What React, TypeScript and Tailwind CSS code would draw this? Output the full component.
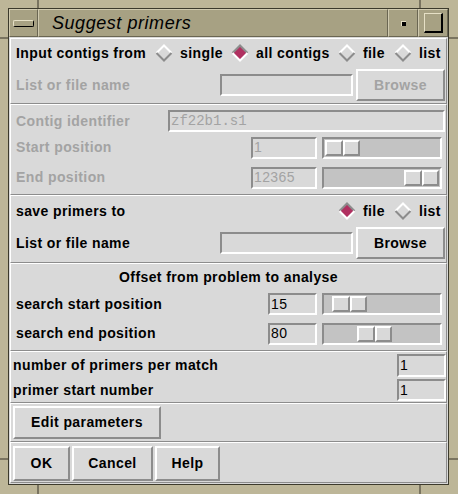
import React from "react";

const FONT = "font-['Liberation_Sans',Arial,sans-serif]";

function Diamond({ on }: { on?: boolean }) {
  return (
    <svg width="18" height="18" viewBox="0 0 18 18" className="shrink-0">
      <polygon points="9,1 17,9 9,17 1,9" fill={on ? "#b03060" : "#d9d9d9"} />
      <polyline points="1.5,9 9,1.5 16.5,9" fill="none" stroke={on ? "#8c8c8c" : "#ffffff"} strokeWidth="2" />
      <polyline points="1.5,9 9,16.5 16.5,9" fill="none" stroke={on ? "#ffffff" : "#8c8c8c"} strokeWidth="2" />
    </svg>
  );
}

function Entry({ w, h = "h-[22px]", text, mono, disabled }: { w: string; h?: string; text?: string; mono?: boolean; disabled?: boolean }) {
  return (
    <div
      className={`${w} ${h} shrink-0 border-2 border-t-[#8c8c8c] border-l-[#8c8c8c] border-b-white border-r-white bg-[#d9d9d9] flex items-center pl-[1px] overflow-hidden whitespace-nowrap ${
        mono ? "font-['Liberation_Mono',monospace] text-[14px]" : "text-[14px] tracking-[0.4px]"
      } ${disabled ? "text-[#a3a3a3]" : "text-black"}`}
    >
      {text}
    </div>
  );
}

function Button({ w, h, label, disabled, cls = "" }: { w: string; h: string; label: string; disabled?: boolean; cls?: string }) {
  return (
    <div
      className={`${w} ${h} ${cls} shrink-0 border-2 border-t-white border-l-white border-b-[#8c8c8c] border-r-[#8c8c8c] bg-[#d9d9d9] flex items-center justify-center font-bold text-[14px] tracking-[0.4px] whitespace-nowrap ${
        disabled ? "text-[#a3a3a3]" : "text-black"
      }`}
    >
      {label}
    </div>
  );
}

function Slider({ ml }: { ml: string }) {
  return (
    <div className="w-[120px] h-[22px] shrink-0 border-2 border-t-[#8c8c8c] border-l-[#8c8c8c] border-b-white border-r-white bg-[#c3c3c3] flex items-center">
      <div className={`${ml} flex`}>
        <div className="w-[18px] h-[16px] border-2 border-t-white border-l-white border-b-[#8c8c8c] border-r-[#8c8c8c] bg-[#d9d9d9]" />
        <div className="w-[17px] h-[16px] border-2 border-t-white border-l-white border-b-[#8c8c8c] border-r-[#8c8c8c] bg-[#d9d9d9]" />
      </div>
    </div>
  );
}

const SECTION = "shrink-0 border border-t-white border-l-white border-b-[#8c8c8c] border-r-[#8c8c8c] flex flex-col";
const LABEL = "font-bold text-[14px] tracking-[0.4px] whitespace-nowrap";

export default function App() {
  return (
    <div className={`${FONT} w-[458px] h-[494px] bg-[#bdb698] pt-[8px] pl-[8px] pr-[9px] pb-[9px] relative`}>
      {/* frame corner marks */}
      <div className="absolute left-[37px] top-0 w-[2px] h-[8px] bg-[#7a7460]" />
      <div className="absolute left-[419px] top-0 w-[2px] h-[8px] bg-[#7a7460]" />
      <div className="absolute left-[37px] bottom-0 w-[2px] h-[9px] bg-[#7a7460]" />
      <div className="absolute left-[419px] bottom-0 w-[2px] h-[9px] bg-[#7a7460]" />
      <div className="absolute left-0 top-[37px] w-[8px] h-[2px] bg-[#7a7460]" />
      <div className="absolute right-0 top-[37px] w-[9px] h-[2px] bg-[#7a7460]" />
      <div className="absolute left-0 top-[458px] w-[8px] h-[2px] bg-[#7a7460]" />
      <div className="absolute right-0 top-[458px] w-[9px] h-[2px] bg-[#7a7460]" />

      <div className="w-full h-full border border-[#3c3a2c] flex flex-col">
        {/* title bar */}
        <div className="h-[28px] shrink-0 bg-[#a7a183] flex">
          <div className="w-[29px] h-full border border-t-[#d0cab0] border-l-[#d0cab0] border-b-[#6a6652] border-r-[#6a6652] flex items-center justify-center">
            <div className="w-[21px] h-[7px] border border-t-[#e6e0c6] border-l-[#e6e0c6] border-b-black border-r-black rounded-[2px] bg-[#a7a183]" />
          </div>
          <div className="flex-1 h-full border border-t-[#d0cab0] border-l-[#d0cab0] border-b-[#6a6652] border-r-[#6a6652] flex items-center pl-[13px]">
            <span className="italic text-[18px] tracking-[0.55px] text-black whitespace-nowrap">Suggest primers</span>
          </div>
          <div className="w-[30px] h-full border border-t-[#d0cab0] border-l-[#d0cab0] border-b-[#6a6652] border-r-[#6a6652] flex items-center justify-center">
            <div className="w-[5px] h-[5px] bg-black border-t border-l border-[#e6e0c6]" />
          </div>
          <div className="w-[30px] h-full border border-t-[#d0cab0] border-l-[#d0cab0] border-b-[#6a6652] border-r-[#6a6652] flex items-center justify-center">
            <div className="w-[19px] h-[20px] border border-t-[#e6e0c6] border-l-[#e6e0c6] border-b-2 border-r-2 border-b-black border-r-black" />
          </div>
        </div>

        {/* content */}
        <div className="flex-1 bg-[#d9d9d9] p-[1px] flex flex-col text-black">
          {/* S1 */}
          <div className={`${SECTION} h-[66px]`}>
            <div className="h-[28px] flex items-center pl-[5px]">
              <span className={`${LABEL} w-[129px]`}>Input contigs from</span>
              <span className="ml-[10px]"><Diamond /></span>
              <span className={`${LABEL} ml-[7px] w-[40px]`}>single</span>
              <span className="ml-[11px]"><Diamond on /></span>
              <span className={`${LABEL} ml-[7px] w-[71px]`}>all contigs</span>
              <span className="ml-[11px]"><Diamond /></span>
              <span className={`${LABEL} ml-[7px] w-[20px]`}>file</span>
              <span className="ml-[11px]"><Diamond /></span>
              <span className={`${LABEL} ml-[7px] w-[21px]`}>list</span>
            </div>
            <div className="h-[36px] flex items-center pl-[5px] pr-[1px]">
              <span className={`${LABEL} flex-1 text-[#a3a3a3]`}>List or file name</span>
              <Entry w="w-[133px]" disabled />
              <Button w="w-[89px]" h="h-[32px]" label="Browse" disabled cls="ml-[3px]" />
            </div>
          </div>

          {/* S2 */}
          <div className={`${SECTION} h-[91px] pt-[3px]`}>
            <div className="h-[26px] flex items-center pl-[5px] pr-[1px]">
              <span className={`${LABEL} flex-1 text-[#a3a3a3]`}>Contig identifier</span>
              <Entry w="w-[277px]" text="zf22b1.s1" mono disabled />
            </div>
            <div className="h-[27px] flex items-center pl-[5px] pr-[4px]">
              <span className={`${LABEL} flex-1 text-[#a3a3a3]`}>Start position</span>
              <Entry w="w-[66px]" text="1" disabled />
              <span className="ml-[5px]"><Slider ml="ml-[1px]" /></span>
            </div>
            <div className="h-[33px] flex items-center pl-[5px] pr-[4px]">
              <span className={`${LABEL} flex-1 text-[#a3a3a3]`}>End position</span>
              <Entry w="w-[66px]" text="12365" disabled />
              <span className="ml-[5px]"><Slider ml="ml-[80px]" /></span>
            </div>
          </div>

          {/* S3 */}
          <div className={`${SECTION} h-[68px]`}>
            <div className="h-[30px] flex items-center pl-[5px] pr-[6px]">
              <span className={`${LABEL} flex-1`}>save primers to</span>
              <Diamond on />
              <span className={`${LABEL} ml-[7px] w-[20px]`}>file</span>
              <span className="ml-[11px]"><Diamond /></span>
              <span className={`${LABEL} ml-[7px] w-[21px]`}>list</span>
            </div>
            <div className="h-[34px] flex items-center pl-[5px] pr-[1px]">
              <span className={`${LABEL} flex-1`}>List or file name</span>
              <Entry w="w-[133px]" />
              <Button w="w-[89px]" h="h-[32px]" label="Browse" cls="ml-[3px]" />
            </div>
          </div>

          {/* S4 */}
          <div className={`${SECTION} h-[88px]`}>
            <div className="h-[27px] flex items-center justify-center">
              <span className={LABEL}>Offset from problem to analyse</span>
            </div>
            <div className="h-[26px] flex items-center pl-[5px] pr-[4px]">
              <span className={`${LABEL} flex-1`}>search start position</span>
              <Entry w="w-[49px]" text="15" />
              <span className="ml-[5px]"><Slider ml="ml-[8px]" /></span>
            </div>
            <div className="h-[33px] flex items-center pl-[5px] pr-[4px]">
              <span className={`${LABEL} flex-1`}>search end position</span>
              <Entry w="w-[49px]" text="80" />
              <span className="ml-[5px]"><Slider ml="ml-[33px]" /></span>
            </div>
          </div>

          {/* S5 */}
          <div className={`${SECTION} h-[52px] pt-[1px]`}>
            <div className="h-[24px] flex items-center pl-[2px]">
              <span className={`${LABEL} flex-1`}>number of primers per match</span>
              <Entry w="w-[49px]" h="h-[23px]" text="1" />
            </div>
            <div className="h-[24px] mt-[1px] flex items-center pl-[2px]">
              <span className={`${LABEL} flex-1`}>primer start number</span>
              <Entry w="w-[49px]" text="1" />
            </div>
          </div>

          {/* S6 */}
          <div className={`${SECTION} h-[39px] justify-center pl-[2px]`}>
            <Button w="w-[148px]" h="h-[33px]" label="Edit parameters" />
          </div>

          {/* S7 */}
          <div className={`${SECTION} h-[41px] !flex-row items-start pt-[3px] pl-[2px]`}>
            <Button w="w-[57px]" h="h-[35px]" label="OK" />
            <Button w="w-[81px]" h="h-[35px]" label="Cancel" cls="ml-[2px]" />
            <Button w="w-[65px]" h="h-[35px]" label="Help" cls="ml-[2px]" />
          </div>
        </div>
      </div>
    </div>
  );
}
